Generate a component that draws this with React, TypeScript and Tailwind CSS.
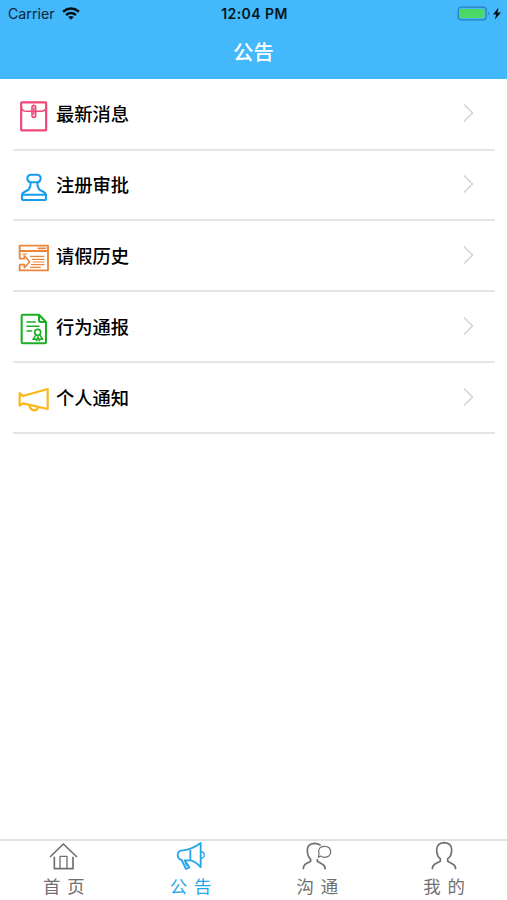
import type { ReactNode } from "react";

const NoticeIcon = ({ box, color, children }: { box: string; color: string; children: ReactNode }) => (
  <svg viewBox={box} className="h-[34px] w-[34px] shrink-0" fill="none" stroke={color} strokeWidth="6.2" strokeLinejoin="round" strokeLinecap="round">
    {children}
  </svg>
);

const items: { label: string; height: string; offset: string; icon: ReactNode }[] = [
  {
    label: "最新消息",
    height: "h-[72px]",
    offset: "",
    icon: (
      <NoticeIcon box="21 27 102 102" color="#ee4778">
        <rect x="33.5" y="37" width="75" height="84" rx="2" strokeWidth="6.5" />
        <path d="M34 53q3 11 15 11h14M80 64h14q12 0 14-11" strokeWidth="4.6" />
        <rect x="66" y="46" width="11" height="36" rx="5.5" strokeWidth="4.8" />
        <path d="M66 64h11M71.5 54v19" strokeWidth="4.2" />
      </NoticeIcon>
    ),
  },
  {
    label: "注册审批",
    height: "h-[70px]",
    offset: "-mt-px",
    icon: (
      <NoticeIcon box="21 33 102 102" color="#159df0">
        <path d="M61 67q-9-2-9-12t10-11h20q10 1 10 11t-9 12zM62 68q0 13-6 21l-13 7q-6 3-7 9v13q0 2 3 2h66q3 0 3-2v-13q-1-6-7-9l-13-7q-6-8-6-21M37 104h70" />
      </NoticeIcon>
    ),
  },
  {
    label: "请假历史",
    height: "h-[71px]",
    offset: "",
    icon: (
      <NoticeIcon box="21 27 102 102" color="#ed853b">
        <path d="M29 76V41h85v74H29v-14M31 57h81" strokeWidth="5.6" />
        <path d="M85 49h22" strokeWidth="5" />
        <path d="M29 80h14v-9l16 18-16 18v-9H29" strokeWidth="4.8" />
        <path d="M38 66h12M61 73h41M67 82h35M70 90h32M65 98h37M62 106h29" strokeWidth="3.7" />
      </NoticeIcon>
    ),
  },
  {
    label: "行为通报",
    height: "h-[71px]",
    offset: "",
    icon: (
      <NoticeIcon box="21 24 102 102" color="#1eae26">
        <path d="M39 32h48l21 22v60q0 4-4 4H39q-4 0-4-4V36q0-4 4-4zM87 32v17q0 5 5 5h16" />
        <path d="M51 54h25M51 67h36M51 81h14" strokeWidth="4.6" />
        <circle cx="83" cy="85" r="9" strokeWidth="5" />
        <path d="M77 94l-8 12 8-1 3 5 4-12 4 12 3-5 7 1-8-13" strokeWidth="4.5" />
      </NoticeIcon>
    ),
  },
  {
    label: "个人通知",
    height: "h-[71px]",
    offset: "",
    icon: (
      <NoticeIcon box="21 24 102 102" color="#fbb718">
        <path d="M29 54l10 9 74-21v60L39 85l-10 7zM58 91q3 15 15 15 8 0 11-9" strokeWidth="6.5" />
      </NoticeIcon>
    ),
  },
];

const TabIcon = ({ box, children }: { box: string; children: ReactNode }) => (
  <svg viewBox={box} className="h-[30px] w-[34px]" fill="none" stroke="currentColor" strokeWidth="5" strokeLinejoin="round">
    {children}
  </svg>
);

const tabs: { label: string; active?: boolean; icon: ReactNode }[] = [
  {
    label: "首页",
    icon: (
      <TabIcon box="139 33 102 90">
        <path d="M151 81l40-39 41 39M164 80v36h56V80" />
        <path d="M181 115V79h21v36" strokeWidth="4" />
      </TabIcon>
    ),
  },
  {
    label: "公告",
    active: true,
    icon: (
      <TabIcon box="519 33 102 90">
        <path d="M602 39v72q-16-17-31-20h-17l14 21-10 5-13-27q-12-3-12-14 0-15 16-15 26-2 53-22zM571 60v31M554 91l8 17" strokeWidth="5.5" />
        <path d="M603 64q10 3 10 11t-10 11" strokeWidth="3.5" />
      </TabIcon>
    ),
  },
  {
    label: "沟通",
    icon: (
      <TabIcon box="129 33 102 90">
        <path d="M191 46q-7-6-19-6-21 1-21 21 0 18 10 27v6l-14 7q-8 4-8 17M205 118q-1-12-10-16l-14-8v-7" />
        <path d="M202 49q19 0 19 16.500t-19 16.500q-6 0-11-4l-7 4 2-10q-5-23 16-23z" strokeWidth="3.6" />
      </TabIcon>
    ),
  },
  {
    label: "我的",
    icon: (
      <TabIcon box="509 33 102 90">
        <path d="M525 118q0-12 8-16l16-8v-8q-11-8-11-27 1-20 22-21 23 1 23 21 0 19-12 27v8l15 8q9 4 9 16" />
      </TabIcon>
    ),
  },
];

export default function App() {
  return (
    <div className="flex h-[900px] w-full flex-col bg-white font-['Noto_Sans_CJK_SC',sans-serif]">
      <header className="h-[79px] bg-[#43b8fa]">
        <div className="grid h-[27px] grid-cols-[1fr_auto_1fr] items-center pl-2 pr-[5px] font-['Inter',sans-serif] leading-none text-[#102638]">
          <div className="flex items-center gap-[7px] pt-px text-[14.2px]">
            <span>Carrier</span>
            <svg viewBox="0 0 18 13" className="-mt-px h-[13px] w-[18px]" fill="none" stroke="#071019" strokeWidth="2.4">
              <path d="M1 4.7q8-6.2 16 0M4 8q5-4 10 0" />
              <path d="M6.2 10q2.8-2.1 5.6 0L9 12.8z" fill="#071019" stroke="none" />
            </svg>
          </div>
          <span className="mr-px pt-px text-[14px] font-semibold tracking-[0.42px] text-[#071521]">12:04 PM</span>
          <div className="flex items-center justify-end">
            <svg viewBox="0 0 46 16" className="h-4 w-[46px]">
              <rect x="2.2" y="1.2" width="28" height="12.6" rx="3" fill="none" stroke="#277fba" strokeWidth="1.2" />
              <rect x="4" y="3" width="24.4" height="9" rx="1" fill="#4bd865" />
              <path d="M32 5.500q2 2 0 4z" fill="#277fba" />
              <path d="M42.5 1.500L37 8.500h3.200l-1.400 5L45 6.500h-3.500z" fill="#071019" />
            </svg>
          </div>
        </div>
        <h1 className="text-center text-[20.4px] font-medium leading-[49px] text-white">公告</h1>
      </header>

      <main className="flex-1 pl-[13px] pr-3">
        {items.map((item) => (
          <button key={item.label} className={`flex w-full items-start border-b-2 border-[#e5e5e5] pl-1 pt-5 text-left ${item.height}`}>
            {item.icon}
            <span className={`ml-[5px] text-[18.3px] font-medium leading-[29px] text-black ${item.offset}`}>{item.label}</span>
            <svg viewBox="0 0 12 20" className={`ml-auto mr-[21px] h-5 w-3 ${item.offset ? "mt-[3px]" : "mt-1"}`} fill="none" stroke="#d4d4d6" strokeWidth="1.6">
              <path d="M2 1.500l8.500 8.500L2 18.500" />
            </svg>
          </button>
        ))}
      </main>

      <nav className="grid h-[61px] grid-cols-4 border-t-2 border-[#e2e2e2]">
        {tabs.map((tab) => (
          <button key={tab.label} className={`flex flex-col items-center ${tab.active ? "text-[#25a5ec]" : "text-[#707070]"}`}>
            {tab.icon}
            <span className="mr-[-8px] text-[17.4px] leading-[29px] tracking-[7px]">{tab.label}</span>
          </button>
        ))}
      </nav>
    </div>
  );
}
